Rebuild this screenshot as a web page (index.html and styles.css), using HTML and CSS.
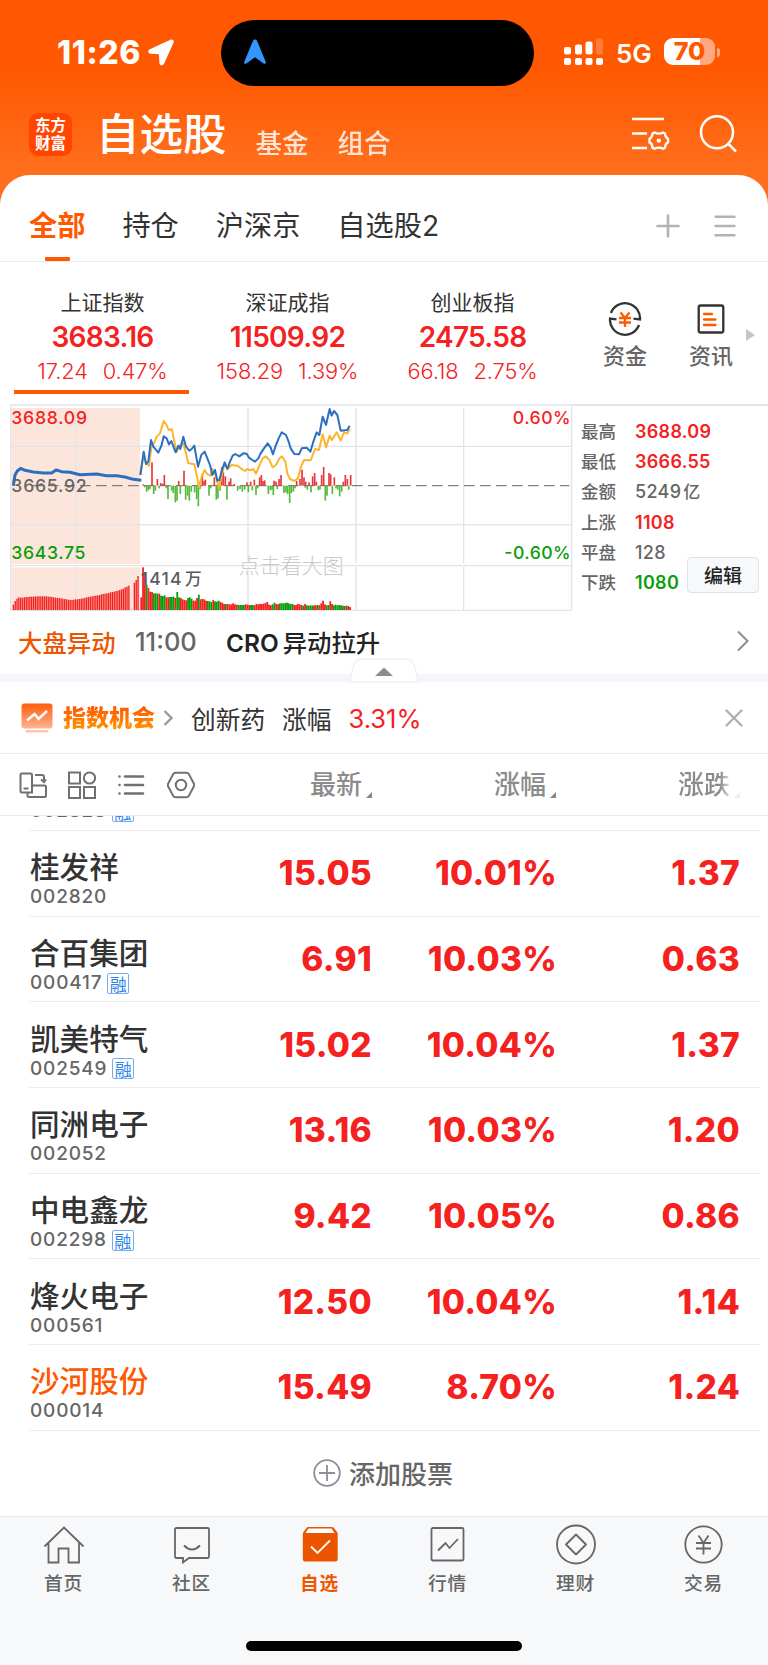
FILE: index.html
```html
<!DOCTYPE html>
<html lang="zh-CN">
<head>
    <meta charset="utf-8">
    <title>自选股</title>
    <meta name="viewport" content="width=device-width, initial-scale=1.0">
    <link rel="stylesheet" href="styles.css">
</head>
<body>
    <header class="top">
        <div class="status">
            <div class="status-left">
                <span class="clock">11:26</span>
                <svg class="loc" width="26" height="27" viewBox="0 0 26 27"><path d="M22.500 .800 1.800 10.200c-2.300 1.200-1.800 4.300.800 4.500l8.300.500.500 8.700c.200 2.800 3.400 3.200 4.600.900L25.600 3.500c.700-1.800-1.100-3.600-3.100-2.700z" fill="#fff"/></svg>
            </div>
            <div class="island">
                <svg width="24" height="26" viewBox="0 0 24 26"><path d="M12 .500c1 0 1.700.600 2.100 1.500l8.600 20.800c.700 1.600-.900 2.600-2.100 1.700L12 18.200l-8.600 6.300c-1.200.900-2.800-.100-2.100-1.700L9.900 2C10.300 1.100 11 .500 12 .500z" fill="#3395ff"/></svg>
            </div>
            <div class="status-right">
                <svg class="signal" width="40" height="28" viewBox="0 0 40 28" fill="#fff">
                    <rect x="0" y="9" width="7" height="7.500" rx="2"/><rect x="11" y="6.500" width="7" height="10" rx="2"/><rect x="21.500" y="3.500" width="7" height="13" rx="2"/><rect x="32" y="0.500" width="7" height="16" rx="2" opacity=".22"/>
                    <rect x="0" y="20" width="7" height="7" rx="2"/><rect x="11" y="20" width="7" height="7" rx="2"/><rect x="21.500" y="20" width="7" height="7" rx="2"/><rect x="32" y="20" width="7" height="7" rx="2"/>
                </svg>
                <span class="net">5G</span>
                <span class="battery">70</span>
                <span class="battery-tip"></span>
            </div>
        </div>
        <nav class="nav">
            <div class="logo">东方<br>财富</div>
            <h1>自选股</h1>
            <a class="nav-link">基金</a>
            <a class="nav-link">组合</a>
            <div class="nav-icons">
                <svg width="40" height="38" viewBox="0 0 40 38" fill="none" stroke="#fff" stroke-width="2.500">
                    <path d="M1 4h32M1 18.500h15M1 33h15"/>
                    <path stroke-width="2.400" stroke-linejoin="round" d="M23.500 17.500q4.500 2.300 8.500 0l2 1q.200 3.800 3 5.300v3.600q-2.800 1.300-3 5.200l-2 1.200q-4-2.300-8.500 0l-2-1.200q-.200-3.900-3-5.200v-3.600q2.800-1.500 3-5.300z"/>
                    <circle cx="27.800" cy="25.600" r="2.200" fill="#fff" stroke="none"/>
                </svg>
                <svg width="38" height="38" viewBox="0 0 38 38" fill="none" stroke="#fff" stroke-width="2.500"><circle cx="18" cy="17.300" r="16"/><path d="M29 28.500l8 8"/></svg>
            </div>
        </nav>
    </header>

    <main class="sheet">
        <div class="tabs">
            <a class="tab active">全部</a>
            <a class="tab">持仓</a>
            <a class="tab">沪深京</a>
            <a class="tab">自选股2</a>
            <svg class="tab-add" width="24" height="24" viewBox="0 0 24 24" stroke="#b3b3b3" stroke-width="2.600" stroke-linecap="round"><path d="M12 1.500v21M1.500 12h21"/></svg>
            <svg width="22" height="24" viewBox="0 0 22 24" stroke="#b3b3b3" stroke-width="2.400" stroke-linecap="round"><path d="M1.500 2.700h19M1.500 12h19M1.500 21.300h19"/></svg>
        </div>

        <section class="indices">
            <div class="index current">
                <div class="index-name">上证指数</div>
                <div class="index-value">3683.16</div>
                <div class="index-change"><span>17.24</span><span>0.47%</span></div>
            </div>
            <div class="index">
                <div class="index-name">深证成指</div>
                <div class="index-value">11509.92</div>
                <div class="index-change"><span>158.29</span><span>1.39%</span></div>
            </div>
            <div class="index">
                <div class="index-name">创业板指</div>
                <div class="index-value">2475.58</div>
                <div class="index-change"><span>66.18</span><span>2.75%</span></div>
            </div>
            <a class="quick">
                <svg width="34" height="34" viewBox="0 0 34 34" fill="none" stroke="#333" stroke-width="2.300">
                    <path d="M3 11A15 15 0 0 1 32 17.500L25.500 16.600"/><path d="M31 23A15 15 0 0 1 2 16.500l6.500 .900"/>
                    <path stroke="#ff5a00" d="M12.500 10.500l4.500 5.500 4.500-5.500M11 16h12M11 20.500h12M17 16v9"/>
                </svg>
                <span>资金</span>
            </a>
            <a class="quick">
                <svg width="34" height="34" viewBox="0 0 34 34" fill="none" stroke="#333" stroke-width="2.300">
                    <rect x="4.700" y="3.500" width="24.600" height="27" rx="2"/>
                    <path stroke="#ff5a00" stroke-linecap="round" d="M10 12h8M10 17.500h11.500M10 23h11.500"/>
                </svg>
                <span>资讯</span>
            </a>
            <i class="more"></i>
        </section>

        <section class="market">
            <svg class="chart" width="563" height="207" viewBox="30 27 1689 621">
                <rect x="34" y="39" width="386" height="468" fill="#fce6db"/>
                <rect x="34" y="517" width="386" height="128" fill="#fce6db"/>
                <g stroke="#e2e3ea" stroke-width="5" fill="none">
                    <path d="M30 30H1719"/>
                    <path stroke-width="4" d="M32 30V647M1715 30V647M32 154H1715M32 389H1715M32 512H1715M32 646H1715"/>
                    <path d="M227 38V506M227 516V645M744 38V506M744 516V645M1068 38V506M1068 516V645M1391 38V506M1391 516V645" stroke-width="4"/>
                </g>
                <path d="M96 272H1708" stroke="#808080" stroke-width="4" stroke-dasharray="32 16"/>
                <g id="flow"></g>
                <g id="volume"></g>
                <g fill="none" stroke-linejoin="round">
                    <path stroke="#fbb62c" stroke-width="6" d="M421 240 431 180 438 205 447 212 455 150 462 145 470 125 480 115 491 78 500 90 506 105 516 103 521 130 530 170 541 150 550 145 557 172 565 205 583 208 590 240 597 277 605 245 614 225 622 238 632 242 637 222 645 235 652 260 657 280 665 240 675 205 683 222 695 210 712 212 725 222 735 228 742 222 750 226 760 222 768 236 778 212 788 190 798 184 808 195 818 217 828 210 838 190 846 184 856 200 862 235 870 252 883 258 894 250 903 215 912 195 932 196 945 162 957 165 968 118 978 157 989 122 995 135 1010 112 1022 137 1032 112 1042 115 1049 102"/>
                    <path stroke="#2a6fc0" stroke-width="6" d="M421 240 431 170 438 207 445 200 453 135 460 155 475 173 485 150 491 124 500 130 507 148 514 138 527 172 535 152 541 162 550 125 558 155 568 167 575 162 583 152 594 215 604 180 614 170 622 190 630 210 637 240 645 225 652 257 658 255 666 225 674 202 682 222 690 200 698 182 706 177 718 184 730 175 740 176 747 188 757 195 765 200 775 190 782 175 792 160 803 145 812 158 819 178 826 155 836 130 845 112 858 120 866 140 872 160 883 177 897 178 905 160 920 158 931 170 940 140 950 112 958 120 968 65 978 90 989 42 995 62 1002 48 1012 60 1022 107 1042 105 1049 92"/>
                    <path stroke="#2a6fc0" stroke-width="9" d="M40 272 45 240 52 228 62 220 75 226 100 231 130 234 155 234 168 225 185 230 210 232 240 239 290 237 320 242 350 242 375 246 400 253 424 256"/>
                </g>
                <g class="chart-text" font-size="53">
                    <text x="34" y="86" fill="#f5211f" textLength="227">3688.09</text>
                    <text x="34" y="290" fill="#666" textLength="226">3665.92</text>
                    <text x="34" y="491" fill="#0a9d0a" textLength="222">3643.75</text>
                    <text x="1538" y="86" fill="#f5211f" textLength="174">0.60%</text>
                    <text x="1513" y="491" fill="#0a9d0a" textLength="199">-0.60%</text>
                    <text x="422" y="569" fill="#5c5c5c" textLength="123">1414</text>
                    <text x="555" y="569" fill="#5c5c5c" font-size="50">万</text>
                    <text class="hint" x="716" y="535" fill="#cacaca" font-size="63">点击看大图</text>
                </g>
            </svg>
            <dl class="stats">
                <dt>最高</dt><dd class="up">3688.09</dd>
                <dt>最低</dt><dd class="up">3666.55</dd>
                <dt>金额</dt><dd>5249<small>亿</small></dd>
                <dt>上涨</dt><dd class="up">1108</dd>
                <dt>平盘</dt><dd>128</dd>
                <dt>下跌</dt><dd class="down">1080</dd>
            </dl>
            <button class="edit">编辑</button>
        </section>

        <div class="news">
            <span class="news-tag">大盘异动</span>
            <span class="news-time">11:00</span>
            <span class="news-title">CRO<b>异动拉升</b></span>
            <svg width="14" height="22" viewBox="0 0 14 22" fill="none" stroke="#8c8c8c" stroke-width="2"><path d="M2 1.500 11.500 11 2 20.500"/></svg>
        </div>
        <div class="divider">
            <svg class="handle" width="70" height="25" viewBox="0 0 70 25"><path d="M1 24 4 9Q6 1 14 1H56q8 0 10 8l3 15z" fill="#fff" stroke="#f0f1f4" stroke-width="1.500"/><path d="M26 18h18l-9-8.500z" fill="#8c8c8c"/></svg>
        </div>

        <div class="chance">
            <svg width="32" height="30" viewBox="0 0 32 30">
                <defs><linearGradient id="g" x2="0" y2="1"><stop offset="0" stop-color="#ff5c0a"/><stop offset="1" stop-color="#ffb495"/></linearGradient></defs>
                <rect x=".500" y=".500" width="31" height="25" rx="3" fill="url(#g)"/>
                <rect x="4.500" y="27" width="23" height="2.500" rx="1" fill="#ffc5ab"/>
                <path d="M6 17.500 13.500 11 17.500 16 26 8" fill="none" stroke="#fff" stroke-width="2.500"/>
            </svg>
            <strong>指数机会</strong>
            <svg class="chance-arrow" width="10" height="18" viewBox="0 0 10 18" fill="none" stroke="#999" stroke-width="2.300"><path d="M1.500 2 8.500 9 1.500 16"/></svg>
            <span>创新药</span>
            <span class="chance-label">涨幅</span>
            <span class="chance-rate">3.31%</span>
            <svg class="close" width="18" height="18" viewBox="0 0 18 18" stroke="#b0b0b0" stroke-width="2.400" stroke-linecap="round"><path d="M1.500 1.500l15 15M16.500 1.500l-15 15"/></svg>
        </div>

        <div class="list-head">
            <div class="tools">
                <svg width="28" height="28" viewBox="0 0 28 28" fill="none" stroke="#707070" stroke-width="2"><path d="M8 21.500H3q-1.500 0-1.500-1.500V4Q1.500 2.500 3 2.500h8.500Q13 2.500 13 4v17.500H8M4.500 17.500h5M16 4h7q2 0 2 2v5M22 8.500l3 2.500 2-2.500"/><path d="M13 14.500h12.500q1.500 0 1.500 1.500v8.500q0 1.500-1.500 1.500H10q-1.500 0-1.500-1.500v-3"/></svg>
                <svg width="28" height="28" viewBox="0 0 28 28" fill="none" stroke="#707070" stroke-width="2"><rect x="1" y="1.500" width="11" height="11"/><circle cx="21.500" cy="7" r="5.600"/><rect x="1" y="16" width="11" height="11"/><rect x="16" y="16" width="11" height="11"/></svg>
                <svg width="28" height="28" viewBox="0 0 28 28" fill="none" stroke="#707070" stroke-width="2.600" stroke-linecap="round"><path d="M8 5.500h18M8 14h18M8 22.500h18M2.500 5.500h.010M2.500 14h.010M2.500 22.500h.010"/></svg>
                <svg width="28" height="28" viewBox="0 0 28 28" fill="none" stroke="#707070" stroke-width="2" stroke-linejoin="round"><path d="M8.500 1.800h11q1.500 0 2.300 1.300l5 9.400q.800 1.500 0 3l-5 9.400q-.800 1.300-2.300 1.300h-11q-1.500 0-2.300-1.300l-5-9.400q-.800-1.500 0-3l5-9.400q.800-1.300 2.300-1.300z"/><circle cx="14" cy="14" r="5.200"/></svg>
            </div>
            <div class="col">最新<i></i></div>
            <div class="col">涨幅<i></i></div>
            <div class="col fade">涨跌<i></i></div>
        </div>

        <div class="list">
            <div class="row clipped">
                <div class="stock"><div class="code">002828<em>融</em></div></div>
            </div>
            <div class="row">
                <div class="stock"><div class="name">桂发祥</div><div class="code">002820</div></div>
                <div class="num">15.05</div><div class="num">10.01%</div><div class="num">1.37</div>
            </div>
            <div class="row">
                <div class="stock"><div class="name">合百集团</div><div class="code">000417<em>融</em></div></div>
                <div class="num">6.91</div><div class="num">10.03%</div><div class="num">0.63</div>
            </div>
            <div class="row">
                <div class="stock"><div class="name">凯美特气</div><div class="code">002549<em>融</em></div></div>
                <div class="num">15.02</div><div class="num">10.04%</div><div class="num">1.37</div>
            </div>
            <div class="row">
                <div class="stock"><div class="name">同洲电子</div><div class="code">002052</div></div>
                <div class="num">13.16</div><div class="num">10.03%</div><div class="num">1.20</div>
            </div>
            <div class="row">
                <div class="stock"><div class="name">中电鑫龙</div><div class="code">002298<em>融</em></div></div>
                <div class="num">9.42</div><div class="num">10.05%</div><div class="num">0.86</div>
            </div>
            <div class="row">
                <div class="stock"><div class="name">烽火电子</div><div class="code">000561</div></div>
                <div class="num">12.50</div><div class="num">10.04%</div><div class="num">1.14</div>
            </div>
            <div class="row">
                <div class="stock"><div class="name hot">沙河股份</div><div class="code">000014</div></div>
                <div class="num">15.49</div><div class="num">8.70%</div><div class="num">1.24</div>
            </div>
        </div>

        <div class="add">
            <svg width="28" height="28" viewBox="0 0 28 28" fill="none" stroke="#8e8e96" stroke-width="1.800"><circle cx="14" cy="14" r="12.800"/><path d="M14 6v16M6 14h16"/></svg>
            <span>添加股票</span>
        </div>
    </main>

    <footer class="tabbar">
        <div class="tabbar-items">
            <a>
                <svg width="42" height="42" viewBox="0 0 42 42"><path d="M1.500 22.500 21 3.500l19.500 19M5.500 19v19.500h10V24.500h10v14h10.500V19"/></svg>
                <span>首页</span>
            </a>
            <a>
                <svg width="42" height="42" viewBox="0 0 42 42"><path d="M5.500 4h31q1.500 0 1.500 1.500v27q0 1.500-1.500 1.500H18l-6 4.500V34H5.500Q4 34 4 32.500v-27Q4 4 5.500 4zM13 21.500q8 8 16 0"/></svg>
                <span>社区</span>
            </a>
            <a class="active">
                <svg width="42" height="42" viewBox="0 0 42 42"><path fill="#ec5500" stroke="none" d="M9 3h24q1 0 2 1l3 4q.700 1 .700 2v25q0 2.500-2.500 2.500H6.300Q3.800 37.500 3.800 35V10q0-1 .700-2l3-4q.700-1 1.500-1z"/><path fill="#fff" stroke="none" d="M9.500 4.600h23L35.500 9H6.500z"/><path stroke="#fff" d="M12 22.500l6.500 6.500L31 16.500"/></svg>
                <span>自选</span>
            </a>
            <a>
                <svg width="42" height="42" viewBox="0 0 42 42"><rect x="4.500" y="4" width="32" height="32.500" rx="1.500"/><path d="M11 26.500 18.500 19l4 5L31 15"/></svg>
                <span>行情</span>
            </a>
            <a>
                <svg width="42" height="42" viewBox="0 0 42 42"><circle cx="21" cy="20.500" r="19"/><path stroke-linejoin="round" d="M21 10.500l10 10-10 10-10-10z"/></svg>
                <span>理财</span>
            </a>
            <a>
                <svg width="42" height="42" viewBox="0 0 42 42"><circle cx="20.500" cy="20.500" r="18.200"/><path d="M15.500 11.500l5 7.500 5-7.500M13 19h15M13 24.500h15M20.500 19v11.500"/></svg>
                <span>交易</span>
            </a>
        </div>
        <div class="home-bar"></div>
    </footer>
    <script src="script.js"></script>
</body>
</html>
```

FILE: styles.css
```css
* { box-sizing: border-box; }
html, body {
    margin: 0;
    padding: 0;
}
body {
    width: 768px;
    height: 1665px;
    overflow: hidden;
    background: #ff6e1c;
    color: #333;
    font-family: Inter, "Noto Sans CJK SC", sans-serif;
    display: flex;
    flex-direction: column;
}
svg { display: block; flex: none; }

/* header */
.top {
    height: 175px;
    background: linear-gradient(#ff5800 0, #ff5800 70px, #ff6e1c 165px);
    color: #fff;
}
.status {
    height: 105px;
    display: grid;
    grid-template-columns: 221px 313px 234px;
}
.status-left {
    display: flex;
    padding: 39px 0 0 57px;
    gap: 7px;
}
.clock { font-weight: 800; font-size: 32px; line-height: 28px; letter-spacing: .6px; }
.island {
    margin-top: 20px;
    height: 66px;
    border-radius: 33px;
    background: #000;
    padding: 19px 22px;
}
.status-right {
    display: flex;
    padding: 38px 0 0 30px;
}
.net { font-size: 26px; font-weight: 600; line-height: 31px; margin-left: 12px; width: 37px; }
.battery {
    margin-left: 11px;
    width: 51px;
    height: 27px;
    border-radius: 9px;
    background: linear-gradient(90deg, #fff 70%, #ffa980 70%);
    color: #ff5800;
    font-size: 25px;
    line-height: 27px;
    font-weight: 800;
    text-align: center;
}
.battery-tip { width: 3px; height: 9px; margin: 10px 0 0 2px; border-radius: 0 3px 3px 0; background: #ffa980; }
.nav {
    height: 70px;
    display: flex;
    padding: 0 30px 0 29px;
}
.logo {
    width: 43px;
    height: 43px;
    margin-top: 8px;
    border-radius: 9px;
    background: #ff4500;
    font-family: "Noto Sans CJK SC", sans-serif;
    font-weight: 700;
    font-size: 15.5px;
    line-height: 17.5px;
    padding-top: 3px;
    text-align: center;
}
.nav h1 {
    margin: 0 0 0 24px;
    font-size: 43.5px;
    line-height: 59px;
    font-weight: 500;
}
.nav-link { font-size: 26.5px; line-height: 36px; margin: 20px 0 0 29px; opacity: .82; font-weight: 500; }
.nav-icons { margin: 10px 0 0 auto; display: flex; gap: 28px; padding-right: 1px; }

/* sheet */
.sheet {
    height: 1341px;
    background: #fff;
    border-radius: 30px 30px 0 0;
}
.tabs {
    height: 87px;
    display: flex;
    align-items: center;
    padding: 16px 32px 0 29px;
    gap: 37px;
    border-bottom: 1px solid #ebebed;
    font-size: 28.2px;
    line-height: 40px;
}
.tab.active {
    color: #ff5800;
    font-weight: 700;
    position: relative;
}
.tab.active::after {
    content: "";
    position: absolute;
    left: 16px;
    bottom: -15px;
    width: 25px;
    height: 4px;
    border-radius: 1px;
    background: #ff5800;
}
.tab-add { margin-left: auto; margin-right: -3px; }

.indices {
    height: 142px;
    display: flex;
    padding-left: 10px;
}
.index { width: 185px; padding-top: 25px; text-align: center; color: #f5211f; }
.index.current { background: linear-gradient(#ff5800, #ff5800) 4px 128px / 175px 4px no-repeat; }
.index-name { color: #333; font-size: 21px; line-height: 31px; }
.index-value { font-size: 28px; line-height: 38px; font-weight: 600; letter-spacing: -.7px; }
.index-change { font-size: 21.8px; line-height: 30px; font-weight: 350; display: flex; justify-content: center; gap: 15px; letter-spacing: -.1px; }
.quick { width: 86px; padding-top: 40px; color: #666; font-size: 22px; display: flex; flex-direction: column; align-items: center; line-height: 30px; font-weight: 500; }
.index + .quick { margin-left: 17px; }
.quick svg { margin-bottom: 5px; }
.more { margin: 67px 0 0 -8px; width: 0; height: 0; border: 6px solid transparent; border-left: 9px solid #c6c6c6; border-right: 0; }

.market {
    height: 207px;
    display: flex;
    padding-left: 10px;
    position: relative;
    background: linear-gradient(#e2e3ea, #e2e3ea) 573px 0 / 100% 2px no-repeat;
}
.chart-text { font-weight: 500; }
.hint { font-weight: 300; }
.stats {
    margin: 12.5px 0 0 8px;
    display: grid;
    grid-template-columns: 54px 1fr;
    grid-auto-rows: 30.4px;
    line-height: 30px;
    font-size: 17.5px;
    color: #666;
}
.stats dt { font-weight: 500; }
.stats dd { margin: 0; font-weight: 600; font-size: 18px; letter-spacing: .3px; }
.stats dd:not(.up):not(.down) { font-weight: 500; }
.stats small { font-size: 17px; margin-left: 2px; }
.up { color: #f5211f; }
.down { color: #0a9d0a; }
.edit {
    position: absolute;
    left: 687px;
    top: 153px;
    width: 72px;
    height: 36px;
    padding: 0;
    border: 1px solid #dfe1e6;
    border-radius: 4px;
    background: #f7f8fa;
    color: #222;
    font: 500 19px/34px "Noto Sans CJK SC", sans-serif;
}

.news {
    height: 63px;
    display: flex;
    align-items: center;
    padding: 0 18px 3px 18px;
    font-size: 24.4px;
}
.news-tag { color: #ec5500; font-weight: 500; width: 117px; }
.news-time { color: #666; width: 91px; font-size: 25.5px; font-weight: 500; padding-top: 1px; }
.news-title { font-weight: 600; color: #222; flex: 1; }
.news-title b { font-weight: 500; margin-left: 4px; }
.divider { height: 8px; background: #f5f6fa; position: relative; }
.handle { position: absolute; left: 349px; top: -16px; }

.chance {
    height: 72px;
    display: flex;
    align-items: center;
    padding: 1px 25px 0 21px;
    border-bottom: 1px solid #ebebed;
    font-size: 24.7px;
}
.chance strong {
    margin-left: 10px;
    font-size: 23px;
    line-height: 34px;
    font-weight: 900;
    background: linear-gradient(#ff5c00 20%, #ff9500 85%);
    -webkit-background-clip: text;
    background-clip: text;
    color: transparent;
}
.chance-arrow { margin: 0 18px 0 8px; }
.chance-label { margin-left: 17px; }
.chance-rate { margin-left: 17px; color: #f5211f; font-size: 25.5px; }
.close { margin-left: auto; }

.list-head {
    height: 62px;
    border-bottom: 1px solid #ebebed;
    display: grid;
    grid-template-columns: 188px 184px 184px 184px;
    align-items: center;
    color: #8c8c8c;
    font-size: 26px;
    font-weight: 500;
}
.tools { display: flex; gap: 21.2px; padding-left: 19px; }
.col { display: flex; justify-content: flex-end; align-items: flex-end; line-height: 36px; padding-top: 1px; }
.col i { border: 3.5px solid #85858a; border-top-color: transparent; border-left-color: transparent; margin: 0 0 5px 4px; }
.col.fade {
    -webkit-mask-image: linear-gradient(90deg, #000 164px, rgba(0, 0, 0, .15) 176px);
    mask-image: linear-gradient(90deg, #000 164px, rgba(0, 0, 0, .15) 176px);
}

.list { margin: 0 9px 0 29px; }
.row {
    height: 85.7px;
    border-bottom: 1.5px solid #ececee;
    display: grid;
    grid-template-columns: 159px 184px 185px 183px;
    align-items: center;
}
.row.clipped { height: 15px; overflow: hidden; display: flex; align-items: flex-end; }
.stock { padding: 13px 0 0 1px; }
.clipped .stock { padding-bottom: 7px; }
.name { font-size: 29.6px; line-height: 35px; font-weight: 500; }
.name.hot { color: #ff5800; }
.code { display: flex; align-items: center; height: 24px; font-size: 19px; line-height: 24px; color: #666; letter-spacing: .8px; font-weight: 500; }
.code em {
    width: 22px;
    height: 21px;
    margin-left: 5px;
    border: 1px solid #75aef0;
    border-radius: 2px;
    color: #2e83e6;
    font: 400 17px/19px "Noto Sans CJK SC", sans-serif;
    letter-spacing: 0;
    text-align: center;
}
.num { text-align: right; font-size: 33.5px; font-weight: 800; color: #f5211f; letter-spacing: .3px; }

.add {
    height: 84px;
    display: flex;
    align-items: center;
    justify-content: center;
    gap: 8px;
    padding-right: 2px;
    font-size: 26px;
    font-weight: 500;
    color: #666;
}

.tabbar {
    height: 149px;
    background: #f7f8fa;
    border-top: 1px solid #e9eaee;
}
.tabbar-items { display: grid; grid-template-columns: repeat(6, 1fr); height: 124px; }
.tabbar-items a { display: flex; flex-direction: column; align-items: center; padding-top: 7px; color: #666; font-size: 18.7px; line-height: 26px; font-weight: 500; }
.tabbar-items span { letter-spacing: .8px; padding-right: 1px; }
.tabbar-items svg { fill: none; stroke: #666; stroke-width: 1.8; margin-bottom: 5px; }
.tabbar-items .active { color: #f25500; font-weight: 700; }
.home-bar { width: 276px; height: 10px; border-radius: 5px; margin: 0 auto; background: #000; }
```

FILE: script.js
```js
var NS = 'http://www.w3.org/2000/svg';

function bar(parent, x, y, w, h, color) {
    var r = document.createElementNS(NS, 'rect');
    r.setAttribute('x', x);
    r.setAttribute('y', y);
    r.setAttribute('width', w);
    r.setAttribute('height', h);
    r.setAttribute('fill', color);
    parent.appendChild(r);
}

// buying / selling bars around the zero line, [x, height]
var flow = document.getElementById('flow');
var flows = [[430,4],[456,70],[472,20],[482,8],[488,6],[493,32],[536,14],[552,45],[607,36],[612,14],[616,18],[643,25],[665,55],[670,40],[676,28],[687,12],[692,22],[703,5],[741,10],[752,12],[763,18],[779,25],[784,32],[789,14],[794,16],[822,15],[828,12],[837,20],[843,32],[890,14],[900,20],[906,48],[912,25],[917,12],[927,10],[938,28],[944,38],[949,12],[965,32],[971,56],[987,38],[992,34],[1003,25],[1030,12],[1036,32],[1042,20],[1052,32],
    [434,-5],[440,-18],[445,-14],[450,-10],[461,-25],[466,-15],[477,-8],[499,-8],[504,-40],[515,-15],[520,-22],[526,-50],[531,-45],[541,-25],[557,-42],[563,-30],[568,-45],[574,-18],[584,-20],[590,-40],[595,-62],[600,-10],[627,-30],[632,-8],[649,-42],[654,-38],[660,-15],[681,-42],[713,-15],[720,-10],[727,-18],[734,-12],[745,-20],[757,-14],[768,-28],[773,-8],[805,-25],[811,-14],[816,-12],[820,-28],[832,-10],[852,-22],[858,-20],[863,-25],[869,-52],[874,-22],[880,-18],[885,-8],[916,-6],[922,-12],[933,-20],[955,-14],[960,-12],[976,-45],[981,-30],[997,-25],[1008,-8],[1013,-12],[1019,-32],[1025,-18],[1046,-12]];
flows.forEach(function (d) {
    bar(flow, d[0] - 2.5, d[1] > 0 ? 272 - d[1] : 272, 5, Math.abs(d[1]), d[1] > 0 ? '#e8383a' : '#58b83a');
});

// volume, morning auction then minute bars
var volume = document.getElementById('volume');
var morning = [16, 27, 34, 38, 37, 37, 38, 39, 39, 40, 40, 40, 41, 41, 41, 41, 41, 41, 41, 40, 40, 39, 38, 37, 36, 36, 35, 34, 33, 32, 31, 30, 30, 31, 32, 32, 33, 34, 35, 36, 38, 39, 40, 41, 42, 43, 44, 45, 47, 48, 49, 50, 51, 53, 54, 55, 57, 58, 60, 62, 64, 68, 70, 73, 0, 0, 82, 90, 102];
morning.forEach(function (h, i) {
    bar(volume, 38 + i * 5.5, 645 - h, 4.2, h, '#f5211f');
});
var minutes = 'r38 r128 r110 g76 r66 r55 r54 g50 g50 g49 r49 g43 g42 g44 r38 r38 g39 g39 g40 r36 g54 g38 r36 r32 r30 r29 g36 g38 g34 r28 r28 r36 g46 r32 r33 r32 r28 g27 g26 g24 r30 g26 g25 g28 r24 r22 r18 g18 r18 r17 r17 r20 r17 r16 g15 g15 g15 g15 r17 r16 r15 g15 g15 r14 r18 r17 r18 r18 r19 r21 r24 r16 r14 g17 g22 r18 r17 g20 g20 g20 g21 g22 g20 g18 g18 r15 r15 r18 r17 r15 g13 r18 g14 g13 g14 g13 r14 r14 g15 r14 r20 r28 r17 g14 g15 r26 r18 g14 g16 g14 g15 g14 g13 r12 g13 r12 r9'.split(' ');
minutes.forEach(function (s, i) {
    var h = +s.slice(1);
    bar(volume, 421 + i * 5.4, 645 - h, 5.4, h, s[0] === 'r' ? '#f5211f' : '#0a9d0a');
});
```
